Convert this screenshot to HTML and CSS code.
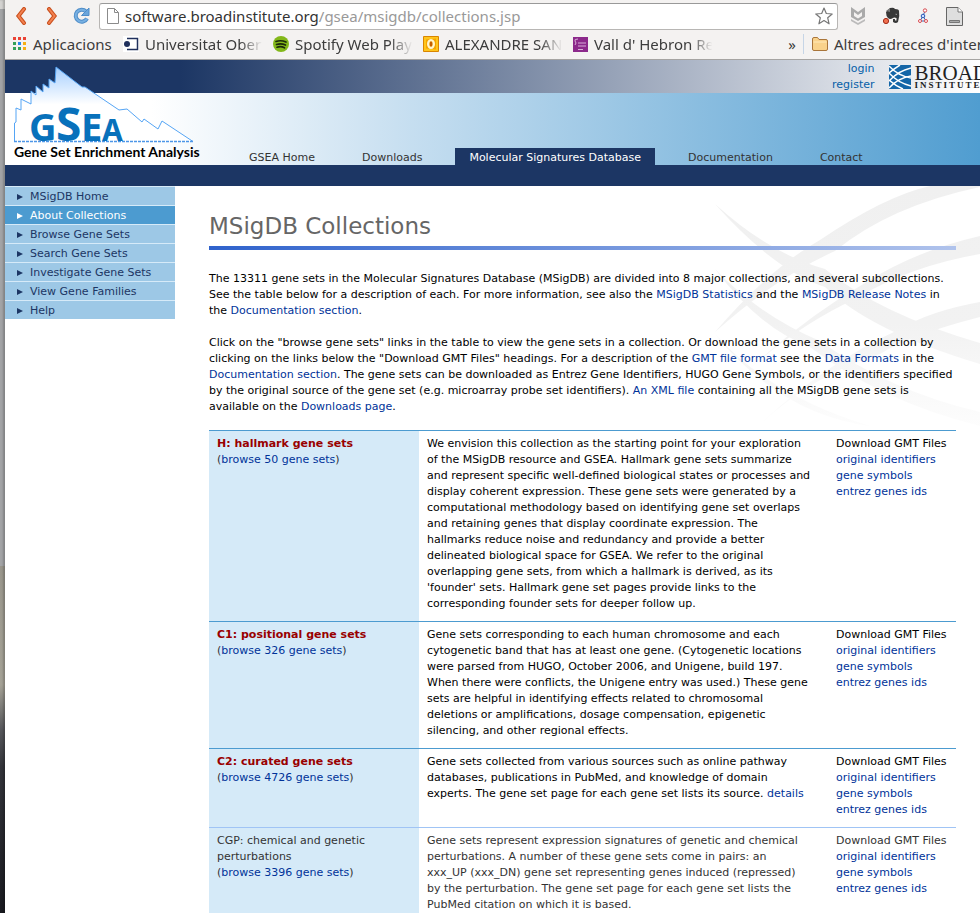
FILE: index.html
```html
<!DOCTYPE html>
<html lang="en">
<head>
<meta charset="utf-8">
<title>MSigDB Collections</title>
<link rel="stylesheet" href="styles.css">
</head>
<body>
<div class="desktop"></div>
<div class="window">
  <div class="toolbar">
    <button class="tool back" aria-label="Back"><svg width="12" height="18" viewBox="0 0 12 18"><path d="M9 2L3.500 9L9 16" fill="none" stroke="#c94f1d" stroke-width="4" stroke-linecap="round"/><path d="M9 2L3.500 9L9 16" fill="none" stroke="#f28150" stroke-width="2" stroke-linecap="round"/></svg></button>
    <button class="tool forward" aria-label="Forward"><svg width="12" height="18" viewBox="0 0 12 18"><path d="M3 2L8.500 9L3 16" fill="none" stroke="#c94f1d" stroke-width="4" stroke-linecap="round"/><path d="M3 2L8.500 9L3 16" fill="none" stroke="#f28150" stroke-width="2" stroke-linecap="round"/></svg></button>
    <button class="tool reload" aria-label="Reload"><svg width="18" height="18" viewBox="0 0 18 18"><path d="M13 4.500A6 6 0 1 0 14 11.500" fill="none" stroke="#4f8dc8" stroke-width="4"/><path d="M13 4.500A6 6 0 1 0 14 11.500" fill="none" stroke="#77b0e2" stroke-width="2"/><path d="M16 1V8.500H8.500Z" fill="#6aa5dc" stroke="#4f8dc8"/></svg></button>
    <div class="address">
      <svg width="12" height="16" viewBox="0 0 12 16"><path d="M.5.5H7.500L11.500 4.500V15.500H.5ZM7.500.5V4.500H11.500" fill="#fff" stroke="#8b8b8b"/></svg>
      <div class="url">software.broadinstitute.org<span>/gsea/msigdb/collections.jsp</span></div>
      <button class="tool" aria-label="Bookmark this page"><svg width="18" height="18" viewBox="0 0 18 18"><path d="M9 1L11.300 6.500L17.200 7L12.700 10.800L14.100 16.800L9 13.600L3.900 16.800L5.300 10.800L.8 7L6.700 6.500Z" fill="#fff" stroke="#777" stroke-width="1.200" stroke-linejoin="round"/></svg></button>
    </div>
    <div class="extensions">
      <svg width="14" height="18" viewBox="0 0 14 18"><path d="M0 0L7 5L14 0V10L7 14L0 10ZM3 5V9L7 11.500L11 9V5L7 8Z" fill="#aaa" fill-rule="evenodd"/><path d="M0 12L7 16L14 12V14L7 18L0 14Z" fill="#bbb"/></svg>
      <svg width="17" height="18" viewBox="0 0 17 18"><path d="M3 5L7 1Q11 0 12 2Q16 2 16 4Q17 9 15 15Q13 17 10 15V12H12V13.500H13.500V11Q11 10 10 11Q7 13 5 11Q3 9 3 5Z" fill="#383838"/><path d="M3 4L7 1V5Z" fill="#777"/><path d="M12 7Q14 6 14 8Z" fill="#bbb"/><circle cx="3" cy="14" r="2.600" fill="#f0704f" stroke="#a02a19"/></svg>
      <svg width="10" height="16" viewBox="0 0 10 16"><path d="M7 3L5 8L2 13M5 8L8 13M2 13H8" fill="none" stroke="#3b67b8"/><circle cx="7" cy="2.500" r="1.700" fill="#fff" stroke="#d84b50"/><circle cx="5" cy="8" r="1.800" fill="#cfe0ff" stroke="#2857b5"/><circle cx="2" cy="13" r="1.500" fill="#fff" stroke="#d84b50"/><circle cx="8" cy="13" r="1.500" fill="#fff" stroke="#d84b50"/></svg>
      <svg width="17" height="19" viewBox="0 0 17 19"><path d="M.5.5H12L16.500 5V18.500H.5Z" fill="#dedede" stroke="#666"/><path d="M12 .5V5H16.500" fill="#fff" stroke="#777"/><path d="M3.500 13.500H13.500V15.500H3.500Z" fill="#aaa" stroke="#777"/></svg>
      <svg width="16" height="14" viewBox="0 0 16 14"><path d="M0 2H16M0 7H16M0 12H16" stroke="#555" stroke-width="2"/></svg>
    </div>
  </div>
  <div class="bookmarks">
    <a href="#" class="mark apps"><svg width="14" height="14" viewBox="0 0 14 14"><path d="M0 0h3v3H0zM5 0h3v3H5zM10 0h3v3h-3z" fill="#ea4335"/><path d="M0 5h3v3H0zM0 10h3v3H0zM5 10h3v3H5z" fill="#34a058"/><path d="M5 5h3v3H5z" fill="#2487ee"/><path d="M10 5h3v3h-3zM10 10h3v3h-3z" fill="#f5ae13"/></svg><span>Aplicacions</span></a>
    <a href="#" class="mark faded"><svg width="16" height="16" viewBox="0 0 16 16"><path d="M0 0H16V16H0Z" fill="#fff"/><path d="M4 2.500H14.500V13.500H4" fill="none" stroke="#20305c" stroke-width="1.500"/><circle cx="4" cy="8" r="3" fill="#20305c"/></svg><span>Universitat Oberta</span></a>
    <a href="#" class="mark faded"><svg width="16" height="16" viewBox="0 0 16 16"><circle cx="8" cy="8" r="8" fill="#83b81a"/><path d="M3 5.500Q8 3.800 13 6M3.500 8.500Q8 7 12.500 9M4 11.200Q8 10 11.500 11.800" fill="none" stroke="#1b2a0b" stroke-width="1.700" stroke-linecap="round"/></svg><span>Spotify Web Player</span></a>
    <a href="#" class="mark faded"><svg width="16" height="16" viewBox="0 0 16 16"><path d="M.5.5H15.500V15.500H.5Z" fill="#ffc51b" stroke="#d98500"/><path d="M3 3.500L13 2.500V13.500L3 12.500Z" fill="#f5a400"/><ellipse cx="8" cy="8" rx="3" ry="4" fill="#ffe78a" stroke="#fff6cf" stroke-width="2"/><ellipse cx="8" cy="8" rx="1.500" ry="2.800" fill="#c75d00"/></svg><span>ALEXANDRE SAN</span></a>
    <a href="#" class="mark faded"><svg width="15" height="15" viewBox="0 0 15 15"><path d="M0 0H15V15H0Z" fill="#8c298b"/><path d="M5 2Q1 2 2 4L3 6L2 8M5 6H13M5 9H13M5 12.500H10" fill="none" stroke="#d9afd9"/></svg><span>Vall d' Hebron Re</span></a>
    <button class="more" aria-label="More bookmarks">»</button>
    <a href="#" class="mark folder"><svg width="16" height="14" viewBox="0 0 16 14"><path d="M.5 12V2Q.5.5 2 .5H5.500L7 2.500H14Q15.500 2.500 15.500 4V12Q15.500 13.500 14 13.500H2Q.5 13.500.5 12Z" fill="#f9d28b" stroke="#a9753a"/><path d="M1.500 5H14.500" stroke="#ffe9b9"/></svg><span>Altres adreces d'interès</span></a>
  </div>

  <header class="masthead">
    <div class="account">
      <div class="login"><a href="#">login</a><a href="#">register</a></div>
      <a href="#" class="broad">
        <svg width="22" height="24" viewBox="0 0 22 24"><path d="M0 0H22V24H0Z" fill="#1466a8"/><path d="M0 1Q9 11 22 13M0 8Q9 18 22 21M0 15Q7 21 14 24M0 23Q9 13 22 11M0 16Q9 6 22 3M0 8Q6 3 11 0" fill="none" stroke="#fff" stroke-width="1.500"/></svg>
        <span class="broad-name"><b>BROAD</b><small>INSTITUTE</small></span>
      </a>
    </div>
    <nav class="tabs">
      <a href="#">GSEA Home</a><a href="#">Downloads</a><a href="#" class="current">Molecular Signatures Database</a><a href="#">Documentation</a><a href="#">Contact</a>
    </nav>
    <a href="#" class="logo">
      <svg width="182" height="78" viewBox="0 0 182 78">
        <defs><linearGradient id="peak" x1="0" y1="0" x2="0" y2="1"><stop offset="0" stop-color="#a5cfff"/><stop offset=".5" stop-color="#fff"/></linearGradient></defs>
        <path d="M.5 76V57L2 56V42L7 44V33L17 38V25L22 29V20L29 26V18L35 22V13L41 17L42 1L68 21L71 21L105 44L113 43L128 56L130 53L144 63L148 55L179 75.500" fill="url(#peak)" stroke="#55a5f5"/>
        <path d="M0 75.500H180" stroke="#4d96e8" stroke-width="1.500" stroke-dasharray="3 1"/>
        <g class="logo-letters"><text x="15" y="75" class="l-mid">G</text><text x="42" y="75" class="l-big">S</text><text x="67" y="75" class="l-mid">E</text><text x="88" y="75" class="l-small">A</text></g>
      </svg>
      <span>Gene Set Enrichment Analysis</span>
    </a>
  </header>

  <div class="page">
    <svg class="swirl" width="270" height="250" viewBox="0 0 270 250">
      <defs><linearGradient id="fade" gradientUnits="userSpaceOnUse" x1="0" y1="0" x2="0" y2="250"><stop offset="0" stop-color="#f0f0f0"/><stop offset=".55" stop-color="#f2f2f2"/><stop offset="1" stop-color="#fefefe"/></linearGradient></defs>
      <g fill="url(#fade)">
        <path d="M5 146Q60 82 110 54Q175 10 220 0H270V1Q180 20 125 65Q65 92 5 146Z"/>
        <path d="M5 216Q80 140 155 97Q205 65 270 50V68Q200 80 145 113Q70 148 5 216Z"/>
        <path d="M45 243Q110 180 190 143Q220 125 270 116V131Q200 149 170 168Q100 190 45 243Z"/>
        <path d="M5 18Q60 68 115 83Q170 128 270 157V178Q160 145 115 101Q65 85 5 18Z"/>
        <path d="M5 83Q50 130 110 155Q180 205 270 226V240Q170 215 100 161Q50 143 5 83Z"/>
        <path d="M5 148Q60 210 160 240Q70 228 5 148Z"/>
      </g>
    </svg>
    <nav class="side">
      <a href="#">MSigDB Home</a>
      <a href="#" class="current">About Collections</a>
      <a href="#">Browse Gene Sets</a>
      <a href="#">Search Gene Sets</a>
      <a href="#">Investigate Gene Sets</a>
      <a href="#">View Gene Families</a>
      <a href="#">Help</a>
    </nav>
    <main>
      <h1>MSigDB Collections</h1>
      <p>The 13311 gene sets in the Molecular Signatures Database (MSigDB) are divided into 8 major collections, and several subcollections. See the table below for a description of each. For more information, see also the <a href="#">MSigDB Statistics</a> and the <a href="#">MSigDB Release Notes</a> in the <a href="#">Documentation section</a>.</p>
      <p>Click on the "browse gene sets" links in the table to view the gene sets in a collection. Or download the gene sets in a collection by clicking on the links below the "Download GMT Files" headings. For a description of the <a href="#">GMT file format</a> see the <a href="#">Data Formats</a> in the <a href="#">Documentation section</a>. The gene sets can be downloaded as Entrez Gene Identifiers, HUGO Gene Symbols, or the identifiers specified by the original source of the gene set (e.g. microarray probe set identifiers). <a href="#">An XML file</a> containing all the MSigDB gene sets is available on the <a href="#">Downloads page</a>.</p>
      <table>
        <tr>
          <th scope="row"><b>H: hallmark gene sets</b><br>(<a href="#">browse 50 gene sets</a>)</th>
          <td>We envision this collection as the starting point for your exploration of the MSigDB resource and GSEA. Hallmark gene sets summarize and represent specific well-defined biological states or processes and display coherent expression. These gene sets were generated by a computational methodology based on identifying gene set overlaps and retaining genes that display coordinate expression. The hallmarks reduce noise and redundancy and provide a better delineated biological space for GSEA. We refer to the original overlapping gene sets, from which a hallmark is derived, as its 'founder' sets. Hallmark gene set pages provide links to the corresponding founder sets for deeper follow up.</td>
          <td class="files">Download GMT Files<br><a href="#">original identifiers</a><br><a href="#">gene symbols</a><br><a href="#">entrez genes ids</a></td>
        </tr>
        <tr>
          <th scope="row"><b>C1: positional gene sets</b><br>(<a href="#">browse 326 gene sets</a>)</th>
          <td>Gene sets corresponding to each human chromosome and each cytogenetic band that has at least one gene. (Cytogenetic locations were parsed from HUGO, October 2006, and Unigene, build 197. When there were conflicts, the Unigene entry was used.) These gene sets are helpful in identifying effects related to chromosomal deletions or amplifications, dosage compensation, epigenetic silencing, and other regional effects.</td>
          <td class="files">Download GMT Files<br><a href="#">original identifiers</a><br><a href="#">gene symbols</a><br><a href="#">entrez genes ids</a></td>
        </tr>
        <tr>
          <th scope="row"><b>C2: curated gene sets</b><br>(<a href="#">browse 4726 gene sets</a>)</th>
          <td>Gene sets collected from various sources such as online pathway databases, publications in PubMed, and knowledge of domain experts. The gene set page for each gene set lists its source. <a href="#">details</a></td>
          <td class="files">Download GMT Files<br><a href="#">original identifiers</a><br><a href="#">gene symbols</a><br><a href="#">entrez genes ids</a></td>
        </tr>
        <tr class="sub">
          <th scope="row">CGP: chemical and genetic perturbations<br>(<a href="#">browse 3396 gene sets</a>)</th>
          <td>Gene sets represent expression signatures of genetic and chemical perturbations. A number of these gene sets come in pairs: an <span class="pair">xxx_UP (xxx_DN)</span> gene set representing genes induced (repressed) by the perturbation. The gene set page for each gene set lists the PubMed citation on which it is based.</td>
          <td class="files">Download GMT Files<br><a href="#">original identifiers</a><br><a href="#">gene symbols</a><br><a href="#">entrez genes ids</a></td>
        </tr>
      </table>
    </main>
  </div>
</div>
</body>
</html>
```
FILE: styles.css
```css
* { box-sizing: border-box; }
html, body { height: 100%; }
body {
  margin: 0;
  display: grid;
  grid-template-columns: 5px minmax(0, 1fr);
  overflow: hidden;
  background: #fff;
  color: #000;
  font: 11px/16px Verdana, "DejaVu Sans", sans-serif;
}
a { color: #039; text-decoration: none; }
button { padding: 0; border: 0; background: none; color: inherit; font: inherit; }
svg { display: block; flex: none; }

.desktop {
  background: linear-gradient(#d4d3d1 0 9px, #a3a4a6 9px 62%, #99968c 62%, #a5a296 75%, #55565a 80%, #33343a 84%, #191a20);
  box-shadow: inset -2px 0 2px #0003;
}
.window { min-width: 0; overflow: hidden; }

.toolbar, .bookmarks {
  display: flex;
  align-items: center;
  background: #f4f2f1;
  color: #3c3c3c;
  font: 15px/20px "Noto Sans", sans-serif;
  white-space: nowrap;
}
.toolbar { height: 32px; padding-left: 10px; gap: 19px; }
.reload { margin-left: -4px; }
.address {
  flex: 1;
  height: 27px;
  margin-left: -11px;
  padding: 0 4px 0 7px;
  display: flex;
  align-items: center;
  gap: 6px;
  border: 1px solid #b8b6b4;
  border-top-color: #999;
  border-radius: 3px;
  background: #fff;
}
.url { flex: 1; overflow: hidden; color: #333; }
.url span { color: #999; }
.extensions { display: flex; align-items: center; gap: 18px; margin: 0 -17px 0 -6px; }

.bookmarks { height: 28px; padding: 0 0 3px 8px; border-bottom: 1px solid #a6a4a2; }
.mark { display: flex; align-items: center; gap: 6px; color: #3c3c3c; overflow: hidden; flex: none; }
.apps { width: 110px; }
.faded { width: 150px; mask-image: linear-gradient(90deg, #000 78%, transparent 93%); }
.more { margin-left: auto; padding: 0 7px; }
.folder { width: 177px; padding-left: 8px; border-left: 1px solid #c6d5e6; }

.masthead { position: relative; border-bottom: 21px solid #1c3664; }
.account {
  height: 33px;
  display: flex;
  justify-content: flex-end;
  gap: 15px;
  background: linear-gradient(90deg, #1c3664 18%, #fff);
}
.login { display: flex; flex-direction: column; padding-top: 1px; text-align: right; }
.login a { color: #0660a8; }
.broad { display: flex; gap: 3px; padding-top: 5px; margin-right: -8px; color: #222; }
.broad-name { display: flex; flex-direction: column; font-family: "Liberation Serif", serif; }
.broad-name b { font-size: 21px; line-height: 16px; font-weight: 400; }
.broad-name small { font-size: 9px; line-height: 8px; font-weight: 700; letter-spacing: 2px; }
.tabs {
  height: 72px;
  padding-left: 230px;
  display: flex;
  align-items: flex-end;
  background: linear-gradient(90deg, #fff 15%, #c9e0f1 40%, #509dd0);
}
.tabs a { height: 17px; padding: 0 14px; margin-right: 19px; line-height: 19px; color: #333; white-space: nowrap; }
.tabs .current { background: #1c3664; color: #fff; }
.logo { position: absolute; left: 9px; top: 6px; color: #000; }
.logo span { display: block; font: 700 14px/16px Lato, sans-serif; white-space: nowrap; }
.logo-letters { fill: #0871bb; font-family: "Noto Sans", sans-serif; font-weight: 700; }
.l-big { font-size: 46px; }
.l-mid { font-size: 38px; }
.l-small { font-size: 30px; }

.page { position: relative; display: flex; gap: 34px; padding-right: 24px; }
.swirl { position: absolute; right: 0; top: 0; z-index: -1; }
.side { flex: 0 0 170px; }
.side a {
  display: flex;
  align-items: center;
  gap: 7px;
  height: 19px;
  padding: 1px 0 0 12px;
  border-top: 1px solid #d6eaf8;
  background: #9dc8e6;
  color: #1c3664;
}
.side a::before { content: ""; border: solid transparent; border-width: 3px 0 3px 6px; border-left-color: currentColor; }
.side .current { background: #4c9bd0; color: #fff; }

main { flex: 1; min-width: 0; }
h1 {
  margin: 24px 0 21px;
  padding-bottom: 4px;
  color: #666;
  font-size: 23px;
  font-weight: 400;
  line-height: 32px;
}
h1::after { content: ""; display: block; height: 4px; margin-top: 4px; margin-bottom: -4px; background: linear-gradient(90deg, #2f62cc, #b0c3ec); }
p { margin: 0 0 16px; }
table { width: 100%; margin-top: -1px; table-layout: fixed; border-collapse: collapse; }
th, td { padding: 5px 16px 9px 8px; border-top: 1px solid #4c9bd0; vertical-align: top; text-align: left; font-weight: 400; }
th { width: 210px; background: #d5eaf8; color: #333; }
th b { color: #900; }
.pair { white-space: nowrap; }
.files { width: 128px; padding-right: 8px; white-space: nowrap; }
.sub td, .sub th { border-top-color: #a0c4f5; color: #333; }
```
